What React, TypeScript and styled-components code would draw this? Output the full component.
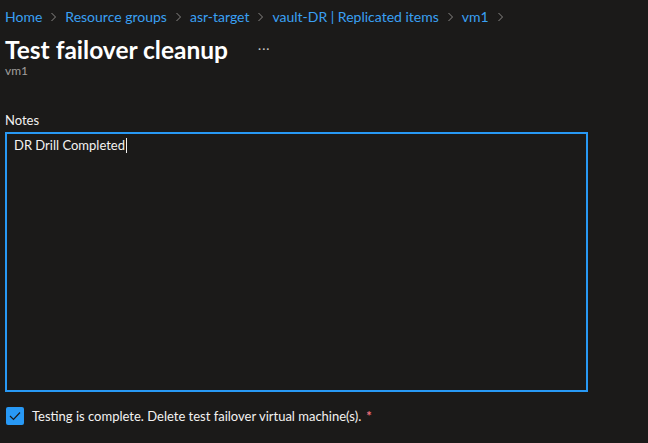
import React from "react";
import styled, { createGlobalStyle } from "styled-components";

const Global = createGlobalStyle`
  html, body { margin: 0; padding: 0; background: #1b1a19; }
  body { font-family: Lato, "Open Sans", sans-serif; color: #f3f2f1; }
  * { box-sizing: border-box; }
`;

const Page = styled.div`
  width: 648px;
  height: 443px;
  background: #1b1a19;
  padding: 7px 60px 0 5px;
  display: flex;
  flex-direction: column;
  overflow: hidden;
`;

const Crumbs = styled.nav`
  display: flex;
  align-items: center;
  gap: 8px;
  font-size: 14px;
  line-height: 20px;
  height: 20px;
`;

const Crumb = styled.span`
  color: #3aa0f3;
  white-space: nowrap;
`;

const Chevron = styled.svg`
  width: 7px;
  height: 10px;
  color: #8a8886;
`;

const TitleRow = styled.div`
  display: flex;
  align-items: center;
  margin-top: 6px;
  height: 32px;
`;

const Title = styled.h1`
  margin: 0;
  font-size: 24.5px;
  font-weight: 700;
  color: #ffffff;
`;

const More = styled.span`
  margin-left: 30px;
  color: #c8c6c4;
  font-size: 12px;
  letter-spacing: 1px;
  line-height: 12px;
`;

const Sub = styled.div`
  font-size: 12px;
  color: #a19f9d;
  line-height: 14px;
  margin-top: -1px;
`;

const Label = styled.label`
  margin-top: 33px;
  font-size: 13px;
  line-height: 18px;
  color: #f3f2f1;
`;

const Area = styled.div`
  margin-top: 3px;
  width: 583px;
  height: 260px;
  border: 2px solid #2899f5;
  padding: 2px 7px;
  font-size: 13px;
  line-height: 18px;
  color: #f3f2f1;
`;

const Caret = styled.span`
  display: inline-block;
  width: 1px;
  height: 15px;
  background: #f3f2f1;
  vertical-align: -3px;
  margin-left: 1px;
`;

const CheckRow = styled.div`
  display: flex;
  align-items: center;
  gap: 8px;
  margin-top: 15px;
  padding-left: 1px;
  font-size: 13px;
  line-height: 18px;
`;

const Box = styled.span`
  width: 18px;
  height: 18px;
  border-radius: 2px;
  background: #2899f5;
  display: flex;
  align-items: center;
  justify-content: center;
`;

const Req = styled.span`
  color: #f1707b;
  font-weight: 700;
  margin-left: 5px;
`;

const ChevronIcon = () => (
  <Chevron viewBox="0 0 7 10">
    <path d="M1.5 1l4 4-4 4" fill="none" stroke="currentColor" strokeWidth="1" />
  </Chevron>
);

const crumbs = ["Home", "Resource groups", "asr-target", "vault-DR | Replicated items", "vm1"];

export default function App() {
  return (
    <Page>
      <Global />
      <Crumbs>
        {crumbs.map((c) => (
          <React.Fragment key={c}>
            <Crumb>{c}</Crumb>
            <ChevronIcon />
          </React.Fragment>
        ))}
      </Crumbs>
      <TitleRow>
        <Title>Test failover cleanup</Title>
        <More>···</More>
      </TitleRow>
      <Sub>vm1</Sub>
      <Label>Notes</Label>
      <Area>
        DR Drill Completed
        <Caret />
      </Area>
      <CheckRow>
        <Box>
          <svg width="12" height="10" viewBox="0 0 12 10">
            <path d="M1 5l3.5 3.5L11 1.5" fill="none" stroke="#1b1a19" strokeWidth="1.2" />
          </svg>
        </Box>
        <span>
          Testing is complete. Delete test failover virtual machine(s).
          <Req>*</Req>
        </span>
      </CheckRow>
    </Page>
  );
}
